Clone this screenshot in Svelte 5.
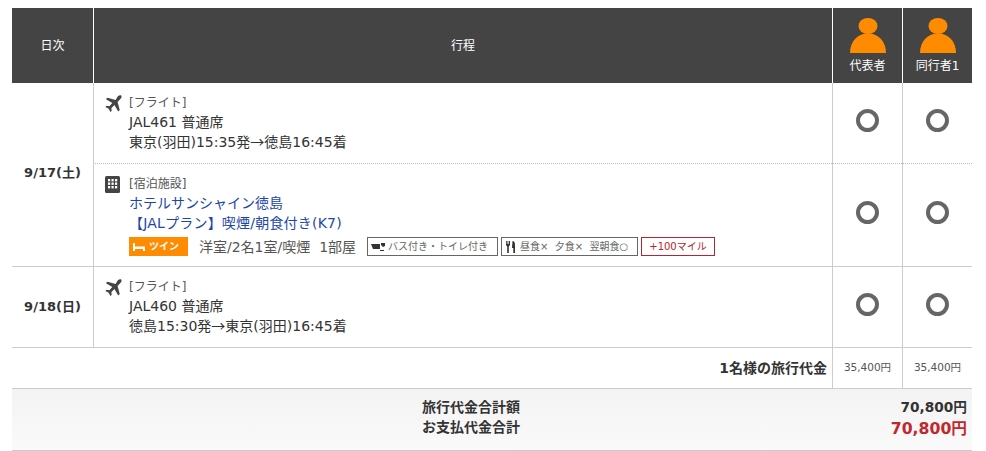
<script>
  const flight = "M13.6 1.2c1-1 2.9-1.4 3.6-.7.7.7.3 2.6-.7 3.6l-3.2 3.2 2.3 8.6-1.6 1.6-4-6.8-3.3 3.2.4 2.9-1.3 1.3-1.9-3.5-3.5-1.9 1.3-1.3 2.9.4 3.2-3.3-6.8-4 1.6-1.6 8.6 2.3z";
  const pax = [0, 1];
</script>

<div class="page">
  <table>
    <colgroup>
      <col class="c-date" /><col /><col class="c-pax" /><col class="c-pax" />
    </colgroup>
    <thead>
      <tr>
        <th>日次</th>
        <th>行程</th>
        {#each ["代表者", "同行者1"] as name}
          <th class="person">
            <svg width="38" height="37" viewBox="0 0 38 37" aria-hidden="true">
              <ellipse cx="19" cy="9" rx="9.5" ry="8" fill="#ff8c00" />
              <path d="M1 36C1 24 9 16.500 19 16.500S37 24 37 36z" fill="#ff8c00" />
            </svg>
            <div>{name}</div>
          </th>
        {/each}
      </tr>
    </thead>
    <tbody>
      <tr class="dotted h80">
        <td class="date first" rowspan="2">9/17(土)</td>
        <td class="trip">
          <div class="item">
            <svg class="icon" viewBox="0 0 18 18" aria-hidden="true"><path d={flight} fill="#444" /></svg>
            <div class="lines">
              <div class="tag">[フライト]</div>
              <div>JAL461 普通席</div>
              <div>東京(羽田)15:35発<span class="arrow">→</span>徳島16:45着</div>
            </div>
          </div>
        </td>
        {#each pax as p}<td class="mark"><span class="ring"></span></td>{/each}
      </tr>
      <tr class="h103">
        <td class="trip">
          <div class="item">
            <svg class="icon bld" viewBox="0 0 15 17" aria-hidden="true">
              <rect width="15" height="17" rx="1.500" fill="#444" />
              {#each [3, 6.500, 10] as y}
                {#each [3, 6.500, 10] as x}
                  <rect {x} {y} width="2.200" height="2.400" fill="#fff" />
                {/each}
              {/each}
            </svg>
            <div class="lines">
              <div class="tag">[宿泊施設]</div>
              <div class="link">ホテルサンシャイン徳島</div>
              <div class="link plan">【JALプラン】喫煙/朝食付き(K7)</div>
              <div class="room">
                <span class="twin">
                  <svg width="12" height="8" viewBox="0 0 12 8" aria-hidden="true"><path d="M0 0h2v3.500h10V8h-2V6H2v2H0z" fill="#fff" /></svg>
                  ツイン
                </span>
                <span class="desc">洋室/2名1室/喫煙&nbsp;&nbsp;1部屋</span>
                <span class="chip c1">
                  <svg width="15" height="10" viewBox="0 0 15 10" aria-hidden="true"><path d="M0 2h9v5H2zM10 1h4v3l-2 1-2-2z M9 8h4v1H9z" fill="#333" /></svg>
                  バス付き・トイレ付き
                </span>
                <span class="chip c2">
                  <svg width="10" height="12" viewBox="0 0 10 12" aria-hidden="true"><path d="M0 0h.8v3h.7V0h.8v3h.7V0H4v4L2.800 5.500V12H1.200V5.500L0 4zM6.500 0C8.500 0 9 2 9 4.500V12H7.300V7H6z" fill="#333" /></svg>
                  <span class="meal">昼食×&nbsp;&nbsp;夕食×&nbsp;&nbsp;翌朝食○</span>
                </span>
                <span class="chip mile">+100マイル</span>
              </div>
            </div>
          </div>
        </td>
        {#each pax as p}<td class="mark"><span class="ring"></span></td>{/each}
      </tr>
      <tr class="h81">
        <td class="date">9/18(日)</td>
        <td class="trip">
          <div class="item">
            <svg class="icon" viewBox="0 0 18 18" aria-hidden="true"><path d={flight} fill="#444" /></svg>
            <div class="lines">
              <div class="tag">[フライト]</div>
              <div>JAL460 普通席</div>
              <div>徳島15:30発<span class="arrow">→</span>東京(羽田)16:45着</div>
            </div>
          </div>
        </td>
        {#each pax as p}<td class="mark"><span class="ring"></span></td>{/each}
      </tr>
      <tr class="sub">
        <td class="sub-label" colspan="2">1名様の旅行代金</td>
        <td class="price">35,400円</td>
        <td class="price">35,400円</td>
      </tr>
      <tr class="total">
        <td colspan="4">
          <div class="total-grid">
            <div class="labels">
              <div>旅行代金合計額</div>
              <div>お支払代金合計</div>
            </div>
            <div class="sums">
              <div>70,800円</div>
              <div class="red">70,800円</div>
            </div>
          </div>
        </td>
      </tr>
    </tbody>
  </table>
</div>

<style>
  :global(body) {
    margin: 0;
    background: #fff;
  }
  .page {
    padding: 8px 14px 0 12px;
    font-family: "DejaVu Sans", "Noto Sans CJK JP", sans-serif;
    font-size: 14px;
    color: #333;
  }
  table {
    width: 960px;
    border-collapse: separate;
    border-spacing: 0;
    table-layout: fixed;
  }
  .c-date { width: 81px; }
  .c-pax { width: 70px; }
  thead th {
    height: 75px;
    padding: 0 0 2px;
    background: #444;
    color: #fff;
    font-weight: normal;
    font-size: 12px;
    text-align: center;
    border-left: 1px solid #fff;
    box-sizing: border-box;
  }
  thead th:first-child { border-left: 0; }
  thead th.person {
    vertical-align: top;
    padding: 9px 0 0;
  }
  th.person svg { display: block; margin: 0 auto; }
  th.person div { line-height: 16px; margin-top: 4px; }
  td {
    padding: 0;
    box-sizing: border-box;
    border-bottom: 1px solid #ccc;
  }
  .dotted td { border-bottom: 1px dotted #bbb; }
  .dotted td.date { border-bottom: 1px solid #ccc; }
  .h80 { height: 81px; }
  .h103 { height: 103px; }
  .h81 { height: 81px; }
  .date {
    text-align: center;
    font-weight: bold;
    font-size: 13px;
    padding-bottom: 3px;
  }
  .date.first { padding-bottom: 6px; }
  .trip {
    padding: 9px 10px 0 10px;
    vertical-align: top;
    border-left: 1px solid #ccc;
  }
  .item { display: flex; gap: 6px; }
  .icon { width: 17px; height: 17px; flex: none; margin: 3px 1px 0; }
  .icon.bld { width: 15px; height: 17px; margin: 3px 3px 0 1px; }
  .lines { line-height: 20px; font-size: 14px; }
  .lines > div { height: 20px; white-space: nowrap; }
  .arrow { font-family: "Noto Sans CJK JP", sans-serif; line-height: 0; }
  .lines > .tag { font-size: 12px; color: #555; line-height: 23px; }
  .link { color: #1c47a8; }
  .plan { letter-spacing: 0.2px; }
  .lines > .room {
    display: flex;
    align-items: center;
    margin-top: 4px;
    height: 19px;
  }
  .twin {
    display: inline-flex;
    align-items: center;
    gap: 4px;
    width: 59px;
    height: 19px;
    box-sizing: border-box;
    padding-left: 4px;
    background: #ff8c00;
    color: #fff;
    font-size: 10px;
    font-weight: bold;
  }
  .desc { margin-left: 11px; font-size: 14px; width: 168px; color: #555; }
  .chip {
    display: inline-flex;
    align-items: center;
    gap: 2px;
    height: 19px;
    box-sizing: border-box;
    border: 1px solid #666;
    font-size: 10px;
    color: #666;
    padding-left: 3px;
    white-space: nowrap;
  }
  .c1 { width: 131px; }
  .c2 { width: 137px; margin-left: 3px; padding-left: 4px; gap: 4px; }
  .meal { font-size: 10px; }
  .mile { width: 74px; margin-left: 3px; justify-content: center; border-color: #b5252d; color: #b5252d; padding: 0; }
  .mark { text-align: center; border-left: 1px solid #ccc; padding-bottom: 6px; }
  .ring {
    display: block;
    width: 23px;
    height: 23px;
    margin: 0 auto;
    box-sizing: border-box;
    border: 4px solid #666;
    border-radius: 50%;
  }
  .sub { height: 41px; }
  .sub-label {
    text-align: right;
    font-weight: bold;
    font-size: 14px;
    padding: 0 5px 2px 0;
  }
  .price {
    text-align: center;
    font-size: 10.500px;
    border-left: 1px solid #ccc;
    color: #555;
    padding-bottom: 3px;
  }
  .total td {
    height: 62px;
    background: linear-gradient(#f3f3f3, #fafafa);
    padding-bottom: 6px;
  }
  .total-grid {
    display: grid;
    grid-template-columns: 1fr 1fr;
    font-weight: bold;
    line-height: 20px;
    font-size: 14px;
  }
  .labels { padding-left: 410px; white-space: nowrap; }
  .sums { text-align: right; padding-right: 5px; font-size: 13.700px; }
  .red { color: #c1272d; font-size: 15.700px; height: 20px; line-height: 24px; }
</style>
